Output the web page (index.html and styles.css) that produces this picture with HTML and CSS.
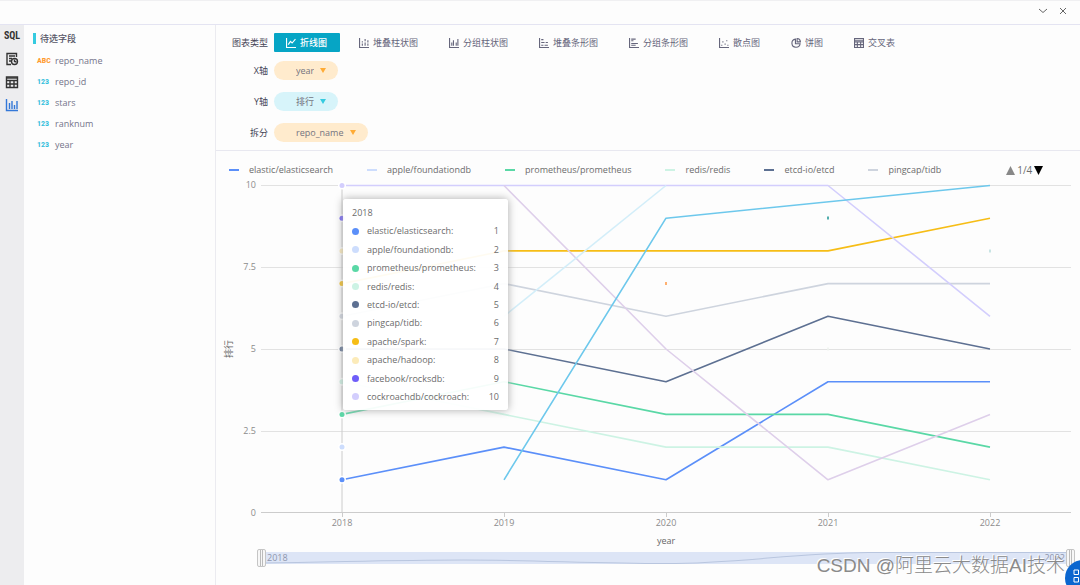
FILE: index.html
```
<!DOCTYPE html>
<html lang="zh-CN">
<head>
<meta charset="utf-8">
<title>折线图</title>
<link rel="stylesheet" href="styles.css">
</head>
<body>
<header class="topbar">
  <button class="icon-btn" aria-label="Collapse"><svg width="10" height="10" viewBox="0 0 10 10"><path d="M1 3l4 3.5L9 3"/></svg></button>
  <button class="icon-btn" aria-label="Close"><svg width="10" height="10" viewBox="0 0 10 10"><path d="M2 2l6 6M8 2l-6 6"/></svg></button>
</header>
<main class="workspace">
  <nav class="rail">
    <button class="rail-btn rail-sql">SQL</button>
    <button class="rail-btn" aria-label="Query log"><svg width="14" height="14" viewBox="0 0 14 14"><path d="M11.500 5V1.500H2V12.500H6M4 4h6M4 6.500h3M4 9h2"/><circle cx="9.500" cy="9.500" r="3"/><path d="M9.500 7.500v2l2 .5"/></svg></button>
    <button class="rail-btn" aria-label="Table"><svg width="14" height="14" viewBox="0 0 14 14"><path d="M1.500 2h11v10.500h-11zM1.500 5.500h11M1.500 9h11M5 5.500v7M9 5.500v7"/><path d="M2 3h10" /></svg></button>
    <button class="rail-btn rail-active" aria-label="Chart"><svg width="14" height="14" viewBox="0 0 14 14"><path d="M1.500 1v11.500H13M4.500 5v6M7 3v8M9.500 7v4M12 3v8"/></svg></button>
  </nav>
  <aside class="fields">
    <h2 class="fields-title">待选字段</h2>
    <ul class="field-list">
      <li><span class="type type-text">ABC</span>repo_name</li>
      <li><span class="type">123</span>repo_id</li>
      <li><span class="type">123</span>stars</li>
      <li><span class="type">123</span>ranknum</li>
      <li><span class="type">123</span>year</li>
    </ul>
  </aside>
  <section class="content">
    <div class="config">
      <div class="config-row">
        <span class="config-label">图表类型</span>
        <div class="tabs">
          <button class="tab tab-active"><svg class="tab-icon" viewBox="0 0 9 9"><path d="M.5 0v8.500H9M2 6l2-3 1.500 1.500L8.500 1"/></svg>折线图</button>
          <button class="tab"><svg class="tab-icon" viewBox="0 0 9 9"><path d="M.5 0v8.500H9M3 3v1M3 5v2M5.500 1v2M5.500 4v3M8 2v2M8 5v2"/></svg>堆叠柱状图</button>
          <button class="tab"><svg class="tab-icon" viewBox="0 0 9 9"><path d="M.5 0v8.500H9M2.500 4v3M4 2v5M6.500 4v3M8 1v6"/></svg>分组柱状图</button>
          <button class="tab"><svg class="tab-icon" viewBox="0 0 9 9"><path d="M.5 0v8.500H9M2 1.500h2M2 4h3M6 4h2M2 6.500h2M5 6.500h3"/></svg>堆叠条形图</button>
          <button class="tab"><svg class="tab-icon" viewBox="0 0 9 9"><path d="M.5 0v8.500H9M2 1h4M2 2.500h2M2 5h6M2 6.500h4"/></svg>分组条形图</button>
          <button class="tab"><svg class="tab-icon" viewBox="0 0 9 9"><path d="M.5 0v8.500H9M2 6.500h1M3 3.500h1M5 5.500h1M6.500 2.500h1M7.500 6.500h1"/></svg>散点图</button>
          <button class="tab"><svg class="tab-icon" viewBox="0 0 9 9"><path d="M4 1a3.700 3.700 0 1 0 4.200 4.200H4zM5.500.5v3h3A3.200 3.200 0 0 0 5.500.5z"/></svg>饼图</button>
          <button class="tab"><svg class="tab-icon" viewBox="0 0 9 9"><path d="M.5 .5h8v8h-8zM.5 2h8M.5 3.500h8M.5 6h8M3 3.500v5M6 3.500v5"/></svg>交叉表</button>
        </div>
      </div>
      <div class="config-row">
        <label class="config-label" for="axis-x">X轴</label>
        <span class="pill"><select id="axis-x"><option>year</option></select><svg class="caret" viewBox="0 0 6 5"><path d="M0 0h6L3 5z"/></svg></span>
      </div>
      <div class="config-row">
        <label class="config-label" for="axis-y">Y轴</label>
        <span class="pill pill-measure"><select id="axis-y"><option>排行</option></select><svg class="caret" viewBox="0 0 6 5"><path d="M0 0h6L3 5z"/></svg></span>
      </div>
      <div class="config-row">
        <label class="config-label" for="split">拆分</label>
        <span class="pill"><select id="split"><option>repo_name</option></select><svg class="caret" viewBox="0 0 6 5"><path d="M0 0h6L3 5z"/></svg></span>
      </div>
    </div>
    <div class="chart">
      <div class="legend">
        <span class="key c-elastic">elastic/elasticsearch</span>
        <span class="key c-apple">apple/foundationdb</span>
        <span class="key c-prom">prometheus/prometheus</span>
        <span class="key c-redis">redis/redis</span>
        <span class="key c-etcd">etcd-io/etcd</span>
        <span class="key c-pingcap">pingcap/tidb</span>
        <span class="pager">
          <button aria-label="Previous page"><svg width="9" height="9" viewBox="0 0 9 9"><path fill="#888" d="M4.500 0L9 9H0z"/></svg></button>
          1/4
          <button aria-label="Next page"><svg width="9" height="9" viewBox="0 0 9 9"><path fill="#000" d="M0 0h9L4.500 9z"/></svg></button>
        </span>
      </div>
      <div class="graph">
        <div class="y-title">排行</div>
        <div class="y-axis"><span>10</span><span>7.5</span><span>5</span><span>2.5</span><span>0</span></div>
        <div class="plot">
          <svg class="lines" viewBox="0 0 810 328" preserveAspectRatio="none">
            <g class="grid"><path d="M0 .5H810M0 82.500H810M0 164.500H810M0 246.500H810"/></g>
            <path class="axis" d="M0 327.500H810"/>
            <path class="cursor" d="M81 0V328"/>
            <g class="series">
              <path class="c-elastic" d="M81 294.800L243 262.100L405 294.800L567 196.700H729"/>
              <path class="c-prom" d="M81 229.400L243 196.700L405 229.400H567L729 262.100"/>
              <path class="c-redis" d="M81 196.700L243 229.400L405 262.100H567L729 294.800"/>
              <path class="c-etcd" d="M81 164H243L405 196.700L567 131.300L729 164"/>
              <path class="c-pingcap" d="M81 131.300L243 98.600L405 131.300L567 98.600H729"/>
              <path class="c-spark" d="M81 98.600L243 65.900H567L729 33.200"/>
              <path class="c-cockroach" d="M81 .5H567L729 131.300"/>
              <path class="c-pink" d="M243 .5L405 164L567 294.800L729 229.400"/>
              <path class="c-pale" d="M243 131.300L405 .5"/>
              <path class="c-sky" d="M243 294.800L405 33.200L729 .5"/>
              <path class="c-teal" d="M567 31.500v3"/>
              <path class="c-orange" d="M405 97v3"/>
              <path class="c-mint" d="M729 64.500v3"/>
              <path class="c-faint" d="M567 162.500v3"/>
            </g>
            <g class="halo"><path d="M81 .5h0M81 33.200h0M81 65.900h0M81 98.600h0M81 131.300h0M81 164h0M81 196.700h0M81 229.400h0M81 262.100h0M81 294.800h0"/></g>
            <g class="points">
              <path class="c-cockroach" d="M81 .5h0"/>
              <path class="c-facebook" d="M81 33.200h0"/>
              <path class="c-hadoop" d="M81 65.900h0"/>
              <path class="c-spark" d="M81 98.600h0"/>
              <path class="c-pingcap" d="M81 131.300h0"/>
              <path class="c-etcd" d="M81 164h0"/>
              <path class="c-redis" d="M81 196.700h0"/>
              <path class="c-prom" d="M81 229.400h0"/>
              <path class="c-apple" d="M81 262.100h0"/>
              <path class="c-elastic" d="M81 294.800h0"/>
            </g>
          </svg>
          <div class="tooltip">
            <div class="tip-title">2018</div>
            <div class="tip-row c-elastic"><span>elastic/elasticsearch:</span><b>1</b></div>
            <div class="tip-row c-apple"><span>apple/foundationdb:</span><b>2</b></div>
            <div class="tip-row c-prom"><span>prometheus/prometheus:</span><b>3</b></div>
            <div class="tip-row c-redis"><span>redis/redis:</span><b>4</b></div>
            <div class="tip-row c-etcd"><span>etcd-io/etcd:</span><b>5</b></div>
            <div class="tip-row c-pingcap"><span>pingcap/tidb:</span><b>6</b></div>
            <div class="tip-row c-spark"><span>apache/spark:</span><b>7</b></div>
            <div class="tip-row c-hadoop"><span>apache/hadoop:</span><b>8</b></div>
            <div class="tip-row c-facebook"><span>facebook/rocksdb:</span><b>9</b></div>
            <div class="tip-row c-cockroach"><span>cockroachdb/cockroach:</span><b>10</b></div>
          </div>
        </div>
        <div class="x-axis"><span>2018</span><span>2019</span><span>2020</span><span>2021</span><span>2022</span></div>
        <div class="x-title">year</div>
        <div class="range">
          <svg class="range-line" viewBox="0 0 808 12" preserveAspectRatio="none"><path d="M0 11C80 10 130 8 202 8S330 11.500 404 11.500S530 1 606 .5H808"/></svg>
          <span class="handle handle-start"></span><span>2018</span><span class="range-end">2022</span><span class="handle handle-end"></span>
        </div>
      </div>
    </div>
  </section>
</main>
<div class="watermark">CSDN @阿里云大数据AI技术</div>
<button class="fab" aria-label="Apps"><svg width="14" height="14" viewBox="0 0 14 14"><path d="M1 1h4.500v4.500H1zM8.500 1H13v4.500H8.500zM1 8.500h4.500V13H1zM8.500 8.500H13V13H8.500z"/></svg></button>
</body>
</html>
```
FILE: styles.css
```
* { box-sizing: border-box; }
html { overflow: hidden auto; }
body {
  margin: 0;
  min-height: 100vh;
  display: flex;
  flex-direction: column;
  position: relative;
  overflow: hidden;
  background: #fdfdfd;
  color: #6c6c6c;
  font: 9px/12px "Open Sans", "Noto Sans CJK SC", sans-serif;
}
button, select {
  appearance: none;
  border: 0;
  padding: 0;
  background: none;
  color: inherit;
  font: inherit;
}
svg { display: block; fill: none; stroke: currentColor; }

.topbar {
  height: 25px;
  display: flex;
  justify-content: flex-end;
  align-items: center;
  gap: 10px;
  padding: 0 12px 3px 0;
  border-top: 1px solid #f0f0f2;
  border-bottom: 1px solid #e4e4f2;
}
.icon-btn { color: #666; }
.workspace { flex: 1; display: flex; }

.rail {
  width: 24px;
  display: flex;
  flex-direction: column;
  align-items: center;
  gap: 9px;
  padding-top: 4px;
  background: #ededef;
  color: #333;
}
.rail-btn { height: 14px; }
.rail-btn svg { stroke-width: 1.4; }
.rail-sql { font: bold 10px/14px "Liberation Sans Narrow", "Roboto Condensed", Roboto, sans-serif; }
.rail-active { color: #3478d8; }

.fields { width: 192px; padding: 8px 9px; border-right: 1px solid #ebebf0; }
.fields-title {
  margin: 0;
  padding-left: 4px;
  border-left: 3px solid #36cbe0;
  color: #556;
  font-size: 9px;
  line-height: 11px;
  font-weight: 500;
}
.field-list {
  display: grid;
  grid-auto-rows: 12px;
  gap: 9px;
  list-style: none;
  margin: 11px 0 0;
  padding: 0 4px;
  color: #74748a;
}
.field-list li { display: flex; align-items: center; }
.type { width: 18px; color: #36bfdc; font: bold 8px/12px "Liberation Sans Narrow", "Roboto Condensed", Roboto, sans-serif; }
.type-text { color: #ff9a2e; }

.content { flex: 1; min-width: 0; display: flex; flex-direction: column; }
.config {
  display: flex;
  flex-direction: column;
  gap: 12px;
  padding: 8px 0 8px;
  border-bottom: 1px solid #e8e8f0;
}
.config-row { display: flex; align-items: center; gap: 6px; }
.config-row:first-child { margin-bottom: -3px; }
.config-label { width: 52px; text-align: right; color: #445; }
.tabs { display: flex; gap: 7px; }
.tab {
  display: flex;
  align-items: center;
  gap: 4px;
  height: 19px;
  padding: 0 12px;
  border-radius: 1px;
  color: #66667c;
  white-space: nowrap;
}
.tab-active { padding-right: 13px; background: #06a5c5; color: #fff; font-weight: 500; }
.tab-icon { width: 10px; height: 10px; }
.pill {
  display: flex;
  align-items: center;
  gap: 6px;
  height: 19px;
  padding: 0 12px 0 22px;
  border-radius: 10px;
  background: #ffebcd;
  color: #ffab35;
}
.pill select { field-sizing: content; color: #74747f; line-height: 14px; }
.pill-measure { background: #d7f4fa; color: #36cbe0; }
.caret { width: 6px; height: 5px; fill: currentColor; stroke: none; }

.c-elastic { --c: #5b8ff9; }
.c-apple { --c: #cdddfd; }
.c-prom { --c: #5ad8a6; }
.c-redis { --c: #cdf3e4; }
.c-etcd { --c: #5d7092; }
.c-pingcap { --c: #ced4de; }
.c-spark { --c: #f6bd16; }
.c-hadoop { --c: #fcebb9; }
.c-facebook { --c: #6f5ef9; }
.c-cockroach { --c: #d3cefd; }
.c-pink { --c: #decfea; }
.c-pale { --c: #d3eef9; }
.c-sky { --c: #6dc8ec; }
.c-teal { --c: #269a99; }
.c-orange { --c: #ff9d4d; }
.c-mint { --c: #bbdede; }
.c-faint { --c: #eef3ee; }

.chart { flex: 1; display: flex; flex-direction: column; }
.legend {
  display: flex;
  align-items: center;
  gap: 34px;
  height: 34px;
  padding: 4px 0 0 13px;
  white-space: nowrap;
}
.key { display: flex; align-items: center; gap: 10px; }
.key::before { content: ""; width: 10px; height: 2px; background: var(--c); }
.pager { display: flex; align-items: center; gap: 2px; margin-left: 31px; font-size: 10px; }
.pager svg { stroke: none; }

.graph {
  flex: 1;
  display: grid;
  grid-template-columns: 14px 20px 1fr;
  grid-template-rows: 1fr 22px 12px 20px;
  padding: 0 9px 18px 6px;
  color: #8c8c8c;
}
.y-title { writing-mode: sideways-lr; text-align: center; line-height: 14px; color: #666; }
.y-axis {
  display: flex;
  flex-direction: column;
  justify-content: space-between;
  margin: -6px 0;
  text-align: right;
}
.plot { position: relative; min-height: 300px; margin-left: 5px; }
.lines { position: absolute; width: 100%; height: 100%; overflow: visible; }
.lines path { vector-effect: non-scaling-stroke; }
.grid { stroke: #e2e2e2; }
.axis { stroke: #ccc; }
.cursor { stroke: #ccc; }
.series path { stroke: var(--c); stroke-width: 1.6px; stroke-linejoin: round; }
.halo { stroke: #fff; stroke-width: 8px; stroke-linecap: round; }
.points { stroke-width: 5px; stroke-linecap: round; }
.points path { stroke: var(--c); }

.tooltip {
  position: absolute;
  left: calc(10% + 1px);
  top: 14px;
  width: 165px;
  height: 211px;
  display: flex;
  flex-direction: column;
  justify-content: space-between;
  padding: 8px 9px 7px;
  border-radius: 3px;
  background: rgba(255, 255, 255, 0.94);
  box-shadow: 0 0 8px #aaa;
  color: #6c6c6c;
}
.tip-row { display: flex; align-items: center; gap: 8px; }
.tip-row::before { content: ""; width: 7px; height: 7px; border-radius: 50%; background: var(--c); }
.tip-row b { margin-left: auto; font-weight: 400; }

.x-axis, .x-title, .range { grid-column: 3; margin-left: 5px; }
.x-axis { display: grid; grid-template-columns: repeat(5, 1fr); text-align: center; }
.x-axis span::before { content: ""; display: block; width: 1px; height: 4px; margin: 0 auto; background: #ccc; }
.x-title { text-align: center; color: #666; }
.range {
  position: relative;
  display: flex;
  align-items: center;
  gap: 1px;
  height: 18px;
  margin-top: 2px;
  color: #8e96ac;
}
.range-line { position: absolute; left: 0; top: 3px; width: 100%; height: 12px; background: #dde5f6; stroke: #b9c6df; }
.range span { position: relative; }
.range .range-end { margin-left: auto; }
.handle {
  width: 9px;
  height: 18px;
  border: 1px solid #c5c5c5;
  border-radius: 2px;
  background: linear-gradient(90deg, #f7f7f7 2px, #bbb 2px 3px, #f7f7f7 3px 4px, #bbb 4px 5px, #f7f7f7 5px);
}
.handle-start { margin-left: -4px; }
.handle-end { margin-right: -4px; }

.watermark {
  position: absolute;
  right: 15px;
  bottom: 6px;
  font: 300 19px/26px "Liberation Sans", "Noto Sans CJK SC", sans-serif;
  color: #8a8a8a;
  text-shadow: -1px -1px 0 #fff;
}
.fab {
  position: absolute;
  right: -21px;
  bottom: -11px;
  width: 36px;
  height: 36px;
  padding: 0 0 4px 8px;
  border-radius: 50%;
  background: #0b66cf;
  color: #fff;
}
```
